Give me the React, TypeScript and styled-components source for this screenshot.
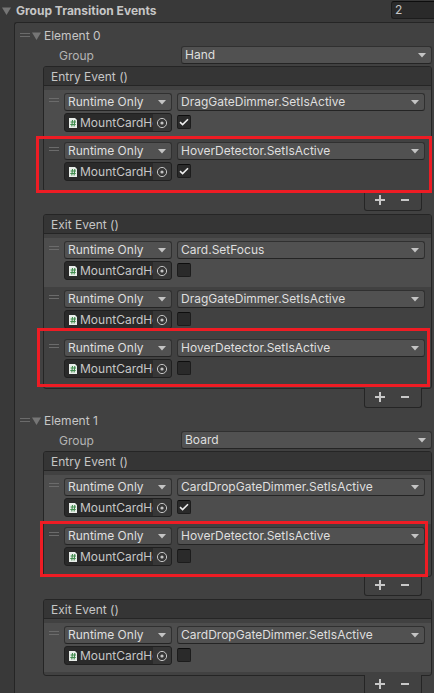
import React from "react";
import styled, { createGlobalStyle, css } from "styled-components";

const GlobalStyle = createGlobalStyle`
  * { box-sizing: border-box; }
  html, body { height: 100%; }
  body {
    margin: 0;
    overflow: hidden;
    background: #393939;
    color: #c6c6c6;
    font: 12px/18px Inter, "Liberation Sans", sans-serif;
  }
  button, input, select { font: inherit; color: inherit; }
`;

const edge = "#252525";

const Inspector = styled.main`
  display: flex;
  flex-direction: column;
`;

const ListHeader = styled.header`
  display: flex;
  align-items: center;
  height: 22px;
  padding-left: 2px;
`;

const FoldoutButton = styled.button<{ $bold?: boolean }>`
  display: flex;
  align-items: center;
  gap: ${(p) => (p.$bold ? 5 : 3)}px;
  padding: 0;
  border: 0;
  background: none;
  font-weight: ${(p) => (p.$bold ? 700 : 400)};
`;

const CountInput = styled.input`
  width: 43px;
  height: 18px;
  margin: 0 0 2px auto;
  padding: 0 3px;
  border: 1px solid #1c1c1c;
  border-top-color: #0d0d0d;
  border-right: 0;
  border-radius: 3px 0 0 3px;
  background: #2a2a2a;
`;

const Panel = styled.section`
  display: flex;
  flex-direction: column;
  gap: 4px;
  margin-left: 14px;
  padding: 4px 2px 4px 5px;
  border: solid ${edge};
  border-width: 1px 0 0 1px;
  border-radius: 3px 0 0 0;
  background: #414141;
`;

const Element = styled.article`
  display: flex;
  flex-direction: column;
`;

const ElementTitle = styled.div`
  display: flex;
  align-items: center;
  gap: 2px;
  height: 18px;
  margin-bottom: 1px;
`;

const GroupRow = styled.div`
  display: grid;
  grid-template-columns: 122px 1fr;
  padding-left: 39px;
  margin-bottom: 2px;
`;

const GroupLabel = styled.span`
  height: 18px;
  color: #b4b4b4;
  line-height: 20px;
`;

const EventList = styled.div`
  display: flex;
  flex-direction: column;
  gap: 3px;
  padding-left: 23px;
`;

const EventBox = styled.div`
  border: 1px solid ${edge};
  border-radius: 3px;
  padding-bottom: 3px;
`;

const EventHeader = styled.h3`
  height: 19px;
  margin: 0 0 4px;
  padding-left: 7px;
  border-bottom: 1px solid ${edge};
  border-radius: 2px 2px 0 0;
  background: #353535;
  font-size: 12px;
  font-weight: 400;
  line-height: 20px;
`;

const ListenerRow = styled.div<{ $active: boolean }>`
  position: relative;
  display: grid;
  grid-template-columns: 10px 108px 1fr;
  grid-template-rows: 18px 18px;
  column-gap: 5px;
  row-gap: 2px;
  height: 49px;
  padding: 3px 6px 0 5px;
  background: ${(p) => (p.$active ? "#4d4d4d" : "transparent")};
`;

const HandleIcon = styled.svg`
  display: block;
  flex: none;
  margin-bottom: 2px;
`;

const HandleCell = styled.div`
  display: flex;
  align-items: flex-start;
  grid-row: span 2;
  padding-top: 5px;
`;

const SelectFrame = styled.label`
  position: relative;
  display: block;
  height: 18px;
  min-width: 0;
`;

const SelectControl = styled.select`
  display: block;
  width: 100%;
  height: 18px;
  padding: 0 18px 0 3px;
  border: 1px solid #303030;
  border-bottom-color: #242424;
  border-radius: 3px;
  background: #515151;
  color: #dfdfdf;
  line-height: 16px;
  appearance: none;
`;

const SelectArrow = styled.svg`
  position: absolute;
  top: 7px;
  right: 6px;
  pointer-events: none;
`;

const ObjectField = styled.div`
  display: flex;
  align-items: center;
  height: 19px;
  padding-left: 3px;
  border: 1px solid #202020;
  border-radius: 3px;
  background: #2a2a2a;
  overflow: hidden;
`;

const ObjectName = styled.span`
  flex: 1;
  min-width: 0;
  margin-left: 1px;
  overflow: hidden;
  white-space: nowrap;
  line-height: 18px;
`;

const PickerButton = styled.button`
  display: grid;
  place-items: center;
  width: 18px;
  height: 17px;
  padding: 0;
  border: 0;
  background: #373737;
`;

const Toggle = styled.label`
  display: grid;
  place-items: center;
  width: 14px;
  height: 14px;
  margin-top: 2px;
  > * { grid-area: 1 / 1; }
  svg { display: none; pointer-events: none; z-index: 1; }
  input:checked + svg { display: block; }
`;

const ToggleInput = styled.input`
  width: 14px;
  height: 14px;
  margin: 0;
  border: 1px solid #1c1c1c;
  border-top-color: #0d0d0d;
  border-radius: 2px;
  background: #2a2a2a;
  appearance: none;
`;

const ListFooter = styled.div`
  display: flex;
  align-self: flex-end;
  justify-content: flex-start;
  width: 58px;
  height: 20px;
  margin: -4px 10px 0 0;
  padding-left: 2px;
  border: 1px solid ${edge};
  border-top: 0;
  border-radius: 0 0 3px 3px;
  background: #414141;
`;

const FooterButton = styled.button`
  display: grid;
  place-items: center;
  width: 25px;
  height: 18px;
  padding: 0;
  border: 0;
  background: none;
`;

type Callout = "wide" | "tall" | "narrow";

const calloutInset = {
  wide: css`inset: -3px -1px -5px -8px;`,
  tall: css`inset: -8px 1px -2px -7px;`,
  narrow: css`inset: -3px 3px -4px -4px;`,
};

const CalloutFrame = styled.span<{ $kind: Callout }>`
  position: absolute;
  ${(p) => calloutInset[p.$kind]}
  z-index: 1;
  border: 3px solid #ee1c24;
  pointer-events: none;
`;

type Listener = { method: string; on: boolean; callout?: Callout };
type GroupEvent = { title: string; listeners: Listener[] };
type Group = { title: string; group: string; events: GroupEvent[] };

const groups: Group[] = [
  {
    title: "Element 0",
    group: "Hand",
    events: [
      {
        title: "Entry Event ()",
        listeners: [
          { method: "DragGateDimmer.SetIsActive", on: true },
          { method: "HoverDetector.SetIsActive", on: true, callout: "wide" },
        ],
      },
      {
        title: "Exit Event ()",
        listeners: [
          { method: "Card.SetFocus", on: false },
          { method: "DragGateDimmer.SetIsActive", on: false },
          { method: "HoverDetector.SetIsActive", on: false, callout: "tall" },
        ],
      },
    ],
  },
  {
    title: "Element 1",
    group: "Board",
    events: [
      {
        title: "Entry Event ()",
        listeners: [
          { method: "CardDropGateDimmer.SetIsActive", on: true },
          { method: "HoverDetector.SetIsActive", on: false, callout: "narrow" },
        ],
      },
      {
        title: "Exit Event ()",
        listeners: [{ method: "CardDropGateDimmer.SetIsActive", on: false }],
      },
    ],
  },
];

const Triangle = () => (
  <svg width="9" height="8" viewBox="0 0 9 8" aria-hidden="true">
    <path d="M0 .5h9L4.5 8z" fill="#767676" />
  </svg>
);

const Handle = () => (
  <HandleIcon width="10" height="4" viewBox="0 0 10 4" aria-hidden="true">
    <path d="M0 0h10v1H0zM0 3h10v1H0z" fill="#6b6b6b" />
  </HandleIcon>
);

function Dropdown({ label, value }: { label: string; value: string }) {
  return (
    <SelectFrame>
      <SelectControl aria-label={label} defaultValue={value}>
        <option>{value}</option>
      </SelectControl>
      <SelectArrow width="8" height="5" viewBox="0 0 8 5" aria-hidden="true">
        <path d="M0 0h8L4 4.6z" fill="#c4c4c4" />
      </SelectArrow>
    </SelectFrame>
  );
}

function ListenerItem({ listener, active }: { listener: Listener; active: boolean }) {
  return (
    <ListenerRow $active={active}>
      <HandleCell>
        <Handle />
      </HandleCell>
      <Dropdown label="Call state" value="Runtime Only" />
      <Dropdown label="Method" value={listener.method} />
      <ObjectField>
        <svg width="11" height="12" viewBox="0 0 11 12" aria-hidden="true">
          <path d="M1 1h6l2 2v8H1z" fill="#e9eeea" />
          <path d="M4.5 3 3.8 9.5M6.8 3l-.7 6.5M2.6 5h5.4M2.3 7.5h5.4" stroke="#3f8a4c" strokeWidth="1.1" fill="none" />
        </svg>
        <ObjectName>MountCardHo</ObjectName>
        <PickerButton aria-label="Select object">
          <svg width="12" height="12" viewBox="0 0 12 12" aria-hidden="true">
            <circle cx="6" cy="6" r="4.6" fill="none" stroke="#c4c4c4" />
            <circle cx="6" cy="6" r="1.6" fill="#c4c4c4" />
          </svg>
        </PickerButton>
      </ObjectField>
      <Toggle>
        <ToggleInput type="checkbox" aria-label="Argument" defaultChecked={listener.on} />
        <svg width="10" height="8" viewBox="0 0 10 8" aria-hidden="true">
          <path d="M1 4.2 3.6 6.6 9 1.2" fill="none" stroke="#eeeeee" strokeWidth="1.6" />
        </svg>
      </Toggle>
      {listener.callout && <CalloutFrame $kind={listener.callout} />}
    </ListenerRow>
  );
}

function EventEditor({ event }: { event: GroupEvent }) {
  return (
    <>
      <EventBox>
        <EventHeader>{event.title}</EventHeader>
        {event.listeners.map((listener, i) => (
          <ListenerItem key={i} listener={listener} active={i === 0} />
        ))}
      </EventBox>
      <ListFooter>
        <FooterButton aria-label="Add listener">
          <svg width="10" height="10" viewBox="0 0 10 10" aria-hidden="true">
            <path d="M5 0v10M0 5h10" stroke="#c8c8c8" strokeWidth="2" />
          </svg>
        </FooterButton>
        <FooterButton aria-label="Remove listener">
          <svg width="8" height="10" viewBox="0 0 8 10" aria-hidden="true">
            <path d="M0 5h8" stroke="#c8c8c8" strokeWidth="2" />
          </svg>
        </FooterButton>
      </ListFooter>
    </>
  );
}

export default function App() {
  return (
    <>
      <GlobalStyle />
      <Inspector>
        <ListHeader>
          <FoldoutButton $bold>
            <Triangle />
            Group Transition Events
          </FoldoutButton>
          <CountInput aria-label="Size" defaultValue="2" />
        </ListHeader>
        <Panel>
          {groups.map((item) => (
            <Element key={item.title}>
              <ElementTitle>
                <Handle />
                <FoldoutButton>
                  <Triangle />
                  {item.title}
                </FoldoutButton>
              </ElementTitle>
              <GroupRow>
                <GroupLabel>Group</GroupLabel>
                <Dropdown label="Group" value={item.group} />
              </GroupRow>
              <EventList>
                {item.events.map((event) => (
                  <EventEditor key={event.title} event={event} />
                ))}
              </EventList>
            </Element>
          ))}
        </Panel>
      </Inspector>
    </>
  );
}
